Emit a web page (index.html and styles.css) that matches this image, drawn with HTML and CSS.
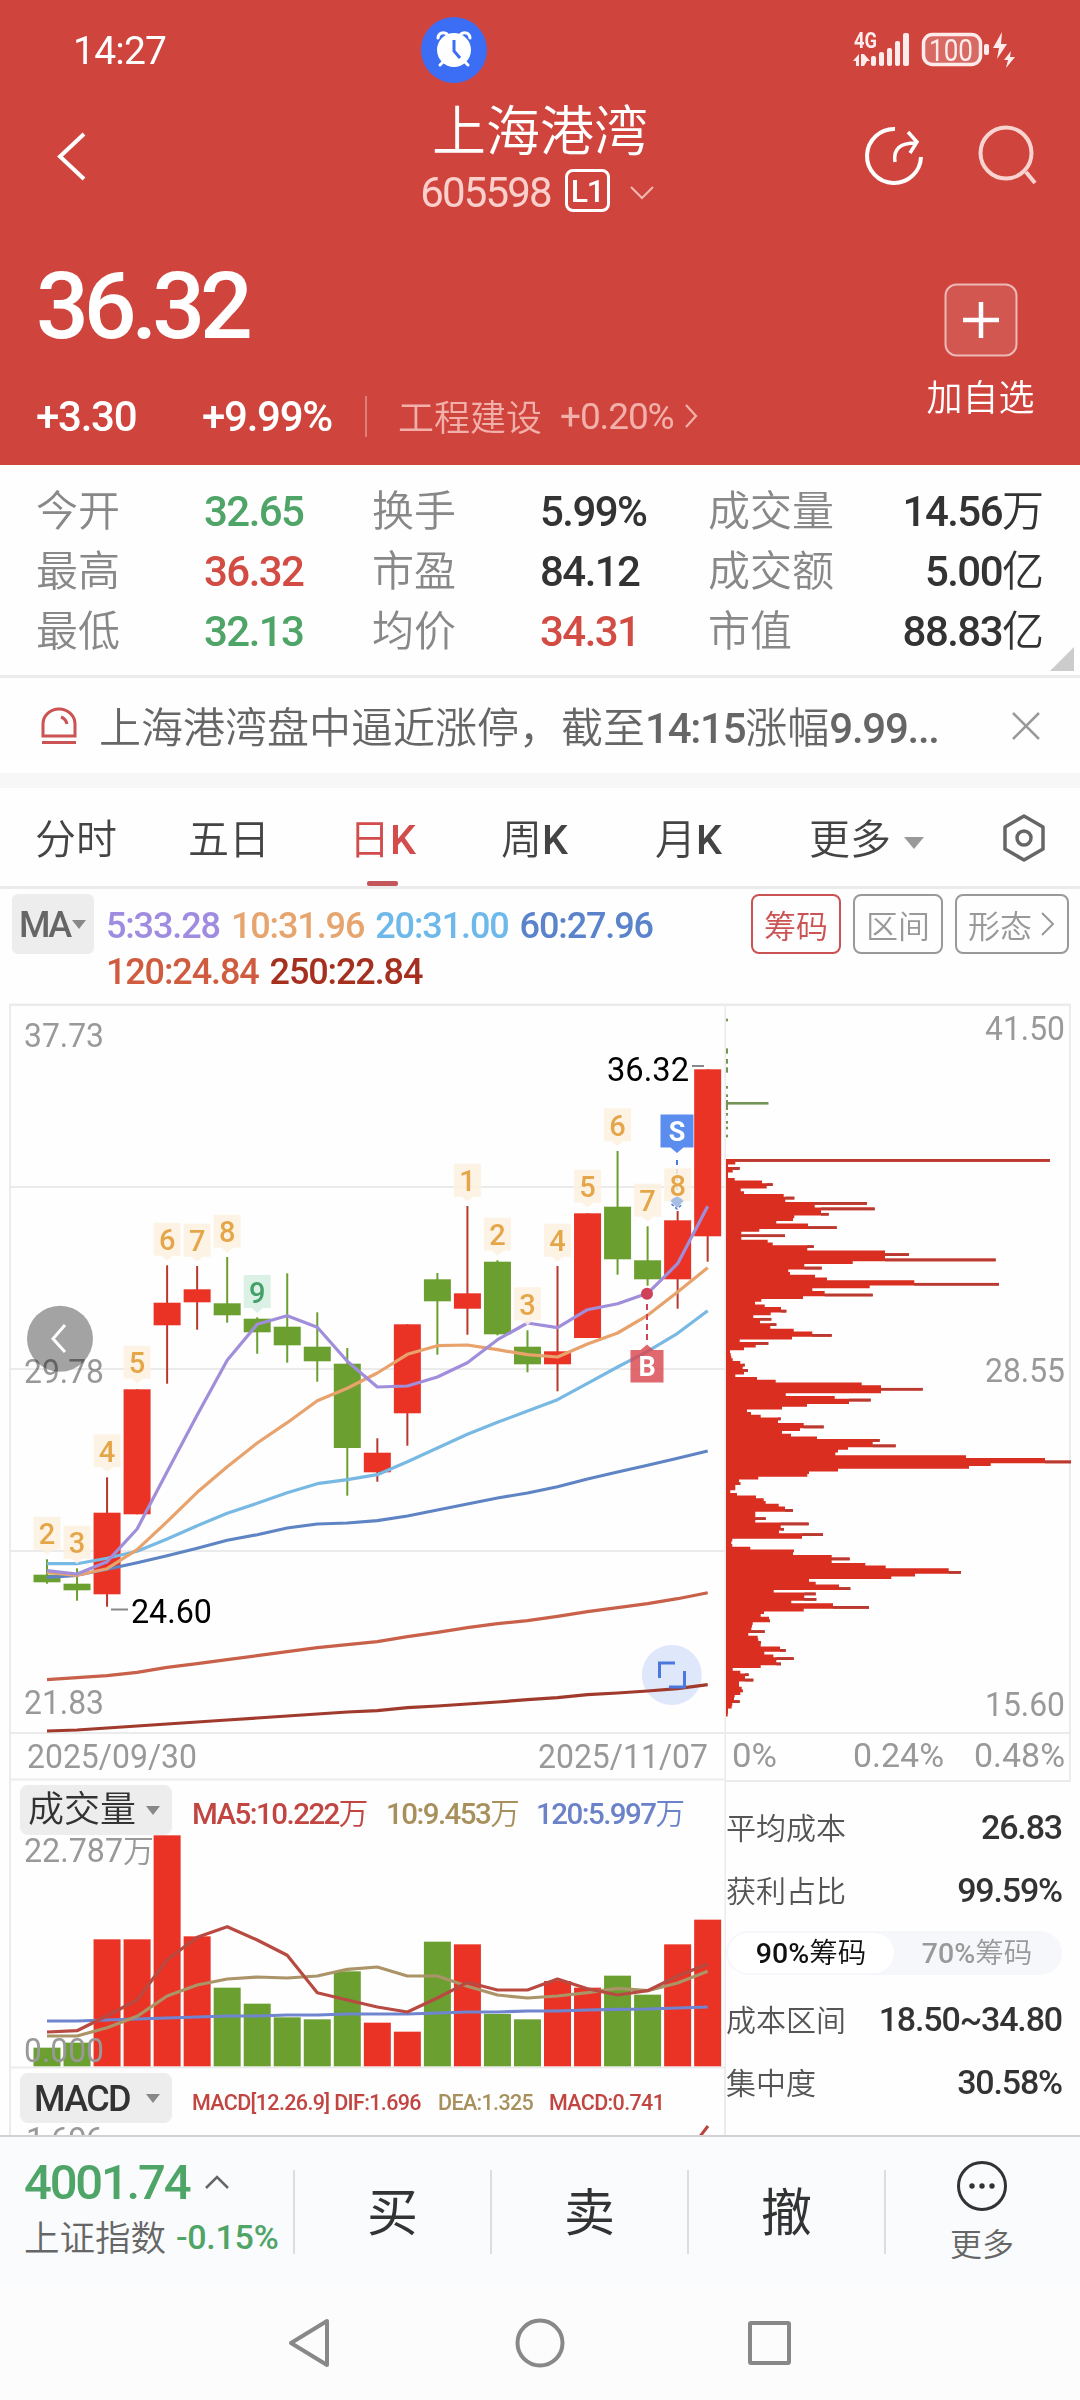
FILE: index.html
```html
<!DOCTYPE html>
<html lang="zh-CN">
<head>
<meta charset="utf-8">
<title>上海港湾 605598</title>
<link rel="stylesheet" href="styles.css">
</head>
<body>
<div class="app">
  <header class="top">
    <div class="status">
      <span class="clock n">14:27</span>
      <svg class="alarm" width="66" height="66" viewBox="0 0 66 66">
        <circle cx="33" cy="33" r="33" fill="#3c6df5"/>
        <g fill="none" stroke="#fff" stroke-width="3" stroke-linecap="round">
          <path d="M17 21a5.500 5.500 0 0 1 9-4M49 21a5.500 5.500 0 0 0-9-4M19 48l4-4M47 48l-4-4"/>
        </g>
        <circle cx="33" cy="33" r="17" fill="#fff"/>
        <path d="M33 23v11l6 7" fill="none" stroke="#3c6df5" stroke-width="3"/>
      </svg>
      <svg class="signal" width="180" height="60" viewBox="0 -11 180 60">
        <text x="4" y="17" class="net" textLength="23" lengthAdjust="spacingAndGlyphs">4G</text>
        <g fill="#fdeceb">
          <path d="M3 30l6-7v12h-3v-5zM11 23h3l6 7h-3l-3 5h-3z"/>
          <rect x="21" y="25" width="5" height="10" rx="2"/><rect x="29" y="21" width="5" height="14" rx="2"/>
          <rect x="37" y="17" width="5" height="18" rx="2"/><rect x="45" y="10" width="5" height="25" rx="2"/>
          <rect x="53" y="2" width="6" height="33" rx="2"/>
          <rect x="134" y="13" width="5" height="11" rx="2"/>
          <path d="M152 1l-9 16h6l-2 11 10-15h-6zM161 20l-7 9h4l-2 8 9-11h-5z"/>
        </g>
        <rect x="73.500" y="3.500" width="57" height="30" rx="9" fill="#fff" fill-opacity=".2" stroke="#fdeceb" stroke-width="3.500"/>
        <text x="79" y="29.500" class="level" textLength="44" lengthAdjust="spacingAndGlyphs">100</text>
      </svg>
    </div>
    <div class="titlebar">
      <svg class="back" width="30" height="52" viewBox="0 0 30 52"><path d="M27 4L3 26.500 27 49" fill="none" stroke="#fff" stroke-width="4"/></svg>
      <div class="name">
        <h1>上海港湾</h1>
        <div class="code"><span class="n">605598</span><b class="lv n">L1</b>
          <svg width="26" height="16" viewBox="0 0 26 16"><path d="M2 2l11 11L24 2" fill="none" stroke="#f3b9b3" stroke-width="2"/></svg>
        </div>
      </div>
      <div class="tools">
        <svg width="64" height="64" viewBox="0 0 64 64" fill="none" stroke="#fff" stroke-width="4">
          <path d="M33 5A27 27 0 1 0 59 33"/><path d="M33 38c-2-13 5-19 21-19M46 8l9 10-7 11" stroke-width="3.500"/>
        </svg>
        <svg width="64" height="64" viewBox="0 0 64 64" fill="none" stroke="#f8d3cf" stroke-width="4">
          <circle cx="31" cy="29" r="25.500"/><path d="M51 48l9 11"/>
        </svg>
      </div>
    </div>
    <div class="quote">
      <div class="price">
        <div class="last n">36.32</div>
        <div class="chg"><span class="n c1">+3.30</span><span class="n c2">+9.99%</span><i></i><span class="ind">工程建设</span><span class="n c3">+0.20%</span>
          <svg width="16" height="26" viewBox="0 0 16 26"><path d="M2 2l10 11L2 24" fill="none" stroke="#f2b0aa" stroke-width="2.200"/></svg>
        </div>
      </div>
      <div class="add">
        <svg width="74" height="74" viewBox="0 0 74 74"><rect x="1.500" y="1.500" width="71" height="71" rx="11" fill="#fff" fill-opacity=".1" stroke="#fff" stroke-opacity=".6" stroke-width="2"/><path d="M37 19v36M19 37h36" stroke="#fff" stroke-width="4.500"/></svg>
        <span>加自选</span>
      </div>
    </div>
  </header>

  <section class="stats">
    <span>今开</span><b class="n g">32.65</b><span>换手</span><b class="n">5.99%</b><span>成交量</span><em><b class="n">14.56</b>万</em>
    <span>最高</span><b class="n r">36.32</b><span>市盈</span><b class="n">84.12</b><span>成交额</span><em><b class="n">5.00</b>亿</em>
    <span>最低</span><b class="n g">32.13</b><span>均价</span><b class="n r">34.31</b><span>市值</span><em><b class="n">88.83</b>亿</em>
    <i class="corner"></i>
  </section>

  <section class="notice">
    <svg width="36" height="38" viewBox="0 0 36 38" fill="none" stroke="#cb5353" stroke-width="3"><path d="M2 29V17a16 15 0 0 1 32 0v12zM1 35.500h34"/><path d="M20 10q5 2 6 7"/></svg>
    <p>上海港湾盘中逼近涨停，截至<b class="n">14:15</b>涨幅<b class="n">9.99...</b></p>
    <svg width="30" height="30" viewBox="0 0 30 30"><path d="M2 2l26 26M28 2L2 28" stroke="#999" stroke-width="2.500"/></svg>
  </section>

  <nav class="tabs">
    <span>分时</span><span>五日</span><span class="on">日<b>K</b></span><span>周<b>K</b></span><span>月<b>K</b></span>
    <span class="more">更多 <i class="tri"></i></span>
    <svg width="46" height="50" viewBox="0 0 46 50" fill="none" stroke="#666" stroke-width="3.500"><path d="M23 3l19 11v22L23 47 4 36V14z" stroke-linejoin="round"/><circle cx="23" cy="25" r="7"/></svg>
  </nav>

  <section class="ma">
    <div class="pill n">MA<i class="tri"></i></div>
    <div class="avgs n">
      <div><span class="m5">5:33.28</span><span class="m10">10:31.96</span><span class="m20">20:31.00</span><span class="m60">60:27.96</span></div>
      <div><span class="m120">120:24.84</span><span class="m250">250:22.84</span></div>
    </div>
    <div class="modes">
      <span class="on">筹码</span><span>区间</span><span>形态<svg width="16" height="26" viewBox="0 0 16 26"><path d="M2 2l11 11L2 24" fill="none" stroke="#999" stroke-width="2"/></svg></span>
    </div>
  </section>

  <main class="charts">
    <div class="left">
      <svg id="kline" width="726" height="777" viewBox="0 1003 726 777"></svg>
      <div class="volwrap">
        <svg id="volume" width="726" height="288" viewBox="0 1780 726 288"></svg>
        <div class="head vol"><div class="pill2">成交量<i class="tri"></i></div>
          <span class="v5"><b class="n">MA5:10.222</b>万</span><span class="v10"><b class="n">10:9.453</b>万</span><span class="v120"><b class="n">120:5.997</b>万</span></div>
      </div>
      <div class="macd">
        <div class="head"><div class="pill2 n">MACD<i class="tri"></i></div>
          <span class="d1 n">MACD[12.26.9] DIF:1.696</span><span class="d2 n">DEA:1.325</span><span class="d3 n">MACD:0.741</span></div>
        <div class="cut"><span class="n">1.696</span><svg width="14" height="14" viewBox="0 0 14 14"><path d="M2 14L12 1" stroke="#b9443f" stroke-width="3"/></svg></div>
      </div>
    </div>
    <div class="right">
      <svg id="chips" width="354" height="780" viewBox="726 1003 354 780"></svg>
      <div class="info">
        <div><span>平均成本</span><b class="n">26.83</b></div>
        <div><span>获利占比</span><b class="n">99.59%</b></div>
        <div class="toggle"><span class="on"><b class="n">90%</b>筹码</span><span><b class="n">70%</b>筹码</span></div>
        <div><span>成本区间</span><b class="n">18.50~34.80</b></div>
        <div><span>集中度</span><b class="n">30.58%</b></div>
      </div>
    </div>
  </main>

  <footer class="bar">
    <div class="index">
      <div class="pt"><b class="n">4001.74</b><svg width="26" height="16" viewBox="0 0 26 16"><path d="M2 14L13 3l11 11" fill="none" stroke="#666" stroke-width="2.500"/></svg></div>
      <div class="nm">上证指数<b class="n">-0.15%</b></div>
    </div>
    <span class="act">买</span><span class="act">卖</span><span class="act">撤</span>
    <div class="etc">
      <svg width="52" height="52" viewBox="0 0 52 52"><circle cx="26" cy="26" r="23.500" fill="none" stroke="#333" stroke-width="3"/><g fill="#333"><circle cx="16" cy="26" r="2.700"/><circle cx="26" cy="26" r="2.700"/><circle cx="36" cy="26" r="2.700"/></g></svg>
      <span>更多</span>
    </div>
  </footer>
  <div class="sysnav">
    <svg width="48" height="52" viewBox="0 0 48 52"><path d="M41 4v44L5 26z"/></svg>
    <svg width="52" height="52" viewBox="0 0 52 52"><circle cx="26" cy="26" r="22.500"/></svg>
    <svg width="48" height="52" viewBox="0 0 48 52"><rect x="4" y="6" width="39" height="40" rx="1"/></svg>
  </div>
</div>
<script src="chart.js"></script>
</body>
</html>
```
FILE: styles.css
```css
* { box-sizing: border-box; }
body { margin: 0; background: #fefefe; }
.app {
  width: 1080px; height: 2400px; overflow: hidden;
  display: flex; flex-direction: column;
  font-family: Roboto, "Noto Sans CJK SC", sans-serif;
  font-weight: 350; color: #333; background: #fefefe;
}
b, em, i, h1, p { font-weight: inherit; font-style: normal; margin: 0; }
svg { display: block; flex: none; overflow: visible; }
.n { letter-spacing: -.037em; font-weight: 500; }
.tri { display: inline-block; width: 0; height: 0; border: 7px solid transparent; border-top: 9px solid #888; border-bottom: 0; }

.top { height: 465px; background: #cf453e; color: #fff; }
.status { height: 96px; display: flex; align-items: center; padding-top: 4px; }
.clock { width: 421px; padding: 2px 0 0 73px; font-size: 39px; font-weight: 400; letter-spacing: -.02em; }
.signal { margin-left: 363px; }
.net { font: 700 22px Roboto, sans-serif; fill: #fdeceb; }
.level { font: 400 32px Roboto, sans-serif; fill: #fdeceb; }
.titlebar { height: 120px; display: grid; grid-template-columns: 1fr auto 1fr; align-items: center; }
.back { margin-left: 57px; }
.name { display: flex; flex-direction: column; align-items: center; height: 120px; padding-top: 3px; }
.name h1 { font-size: 54px; line-height: 68px; }
.code { display: flex; align-items: center; height: 52px; font-size: 42px; color: #fbd0cc; margin-left: -5px; padding-top: 1px; }
.code .n { font-weight: 400; letter-spacing: -.045em; }
.lv { margin: -4px 19px 0 14px; width: 45px; height: 43px; border: 3px solid #fff; border-radius: 8px; color: #fff; font-size: 32px; line-height: 38px; text-align: center; }
.code .lv { font-weight: 500; }
.tools { display: flex; justify-content: flex-end; gap: 49px; padding-right: 41px; }
.quote { display: flex; justify-content: space-between; height: 249px; }
.price { padding: 36px 0 0 36px; }
.last { font-size: 93px; line-height: 110px; letter-spacing: -.055em; }
.chg { display: flex; align-items: center; height: 50px; margin-top: 29px; font-size: 42px; }
.chg .n { letter-spacing: -.03em; }
.c1 { width: 166px; } .c2 { width: 163px; }
.chg i { width: 2px; height: 41px; background: #de807a; margin-right: 31px; }
.ind { width: 162px; font-size: 36px; color: #f2b0aa; margin-top: -2px; }
.c3 { width: 124px; font-size: 37px; color: #f2b0aa; font-weight: 400; }
.chg .c3 { font-weight: 400; }
.add { width: 199px; display: flex; flex-direction: column; align-items: center; padding-top: 67px; font-size: 36px; line-height: 44px; }
.add span { margin-top: 20px; }

.stats { height: 213px; position: relative; padding: 17px 36px 0 36px; border-bottom: 3px solid #ebebeb; display: grid; grid-template-columns: 168px 168px 168px 168px 150px 1fr; grid-auto-rows: 60px; align-items: center; font-size: 42px; line-height: 60px; }
.stats span { color: #888; }
.stats .g { color: #4fa468; } .stats .r { color: #d24c44; }
.stats em { text-align: right; white-space: nowrap; }
.corner { position: absolute; right: 6px; bottom: 4px; border-left: 24px solid transparent; border-bottom: 24px solid #ccc; }

.notice { height: 95px; display: flex; align-items: center; padding: 0 39px 0 41px; font-size: 42px; color: #666; }
.notice p { width: 911px; margin: -2px 0 0 22px; white-space: nowrap; }
.notice .n { letter-spacing: -.03em; }
.notice svg:last-child { margin-left: auto; }
.tabs { height: 116px; border-top: 15px solid #f7f7f7; border-bottom: 3px solid #ebebeb; display: grid; grid-template-columns: 153px 161px 152px 154px 154px 192px 46px; padding-left: 35px; align-items: center; font-size: 41px; color: #444; }
.tabs span { line-height: 105px; height: 98px; position: relative; white-space: nowrap; }
.tabs svg { margin-top: 2px; }
.tabs b { font-weight: 500; }
.tabs .on { color: #d24c4c; }
.tabs .on::after { content: ""; position: absolute; left: 18px; bottom: 0; width: 31px; height: 5px; border-radius: 2px; background: #c4555a; }
.more .tri { border-width: 12px 10.500px 0; border-top-color: #999; margin-left: 3px; vertical-align: 5px; }

.ma { height: 114px; display: flex; padding: 5px 11px 0 12px; }
.pill { width: 82px; height: 60px; border-radius: 6px; background: #ededed; color: #666; font-size: 36px; line-height: 63px; padding-left: 7px; letter-spacing: -.07em; }
.pill .tri { vertical-align: 8px; margin-left: 2px; }
.avgs { width: 658px; padding: 9px 0 0 12px; font-size: 36px; line-height: 46px; letter-spacing: -.031em; }
.avgs span { display: inline-block; margin-right: 11px; }
.m5 { color: #9f8ce0; } .m10 { color: #e6a56e; } .m20 { color: #6fb8ea; } .m60 { color: #5a83cc; } .m120 { color: #d05c40; } .m250 { color: #a5301f; }
.modes { display: flex; gap: 12px; font-size: 32px; color: #999; }
.modes span { width: 90px; height: 60px; border: 2px solid #999; border-radius: 8px; display: flex; align-items: center; justify-content: center; padding-bottom: 1px; }
.modes .on { color: #cb5353; border-color: #cb5353; }
.modes span:last-child { width: 114px; gap: 8px; }

.charts { height: 1132px; display: flex; overflow: hidden; }
.left { width: 726px; }
.volwrap { position: relative; }
.head { display: flex; align-items: center; padding-left: 20px; font-size: 29.500px; height: 60px; }
.head.vol { position: absolute; left: 0; top: 0; }
.head.vol > span { padding-top: 2px; }
.head.vol > span .n { letter-spacing: -.052em; }
.pill2 { width: 152px; height: 50px; background: #ededed; border-radius: 8px; font-size: 36px; line-height: 50px; padding-left: 8px; display: flex; align-items: center; margin-right: 20px; }
.pill2 .tri { margin-left: 10px; }
.pill2.n { padding-left: 14px; padding-top: 1px; letter-spacing: -.045em; } .pill2.n .tri { margin-left: 16px; }
.v5 { width: 194px; color: #c14540; } .v10 { width: 150px; color: #a8905c; } .v120 { color: #6b82c9; }
.macd { height: 67px; border-left: 2px solid #ebebeb; border-right: 2px solid #ebebeb; margin-left: 9px; position: relative; }
.macd .head { padding-left: 9px; font-size: 21.500px; }
.macd .head > span { padding-top: 8px; letter-spacing: -.03em; }
.d1 { width: 246px; color: #c14540; } .d2 { width: 111px; color: #a8905c; } .d3 { color: #c14540; }
.cut { height: 12px; margin-top: -3px; display: flex; justify-content: space-between; padding: 0 14px 0 15px; font-size: 33px; line-height: 38px; color: #999; overflow: hidden; }
.cut .n { font-weight: 400; margin-top: -4px; }
.right { width: 354px; }
.info { padding: 11px 18px 0 0; font-size: 30px; color: #555; }
.info div { height: 63px; display: flex; justify-content: space-between; align-items: center; }
.info div > .n { font-size: 34px; color: #333; letter-spacing: -.034em; padding-top: 2px; }
.info .toggle { height: 44px; border-radius: 22px; background: #f6f7fa; padding: 2px; font-size: 28.500px; margin: 11px 0 11px; color: #999; }
.toggle span { width: 50%; text-align: center; line-height: 41px; height: 40px; border-radius: 20px; }
.toggle .n { letter-spacing: 0; }
.toggle .on { background: #fff; color: #111; }

.bar { height: 151px; border-top: 2px solid #d2d2d2; background: #fafbfd; display: flex; align-items: center; }
.index { width: 293px; padding-left: 24px; height: 149px; color: #666; font-size: 35.500px; }
.pt { display: flex; align-items: center; height: 68px; margin-top: 11px; font-size: 49px; color: #4fa468; }
.pt .n { letter-spacing: -.045em; }
.pt svg { margin-left: 15px; }
.nm { display: flex; height: 44px; margin-top: -3px; align-items: center; white-space: nowrap; }
.nm b { color: #4fa468; font-size: 34px; margin: 3px 0 0 10px; }
.nm .n { letter-spacing: -.008em; }
.act, .etc { border-left: 2px solid #ddd; height: 84px; width: 197px; text-align: center; }
.act { font-size: 51px; line-height: 87px; font-weight: 400; }
.etc { width: 194px; display: flex; flex-direction: column; align-items: center; justify-content: center; font-size: 32px; color: #666; padding-top: 4px; }
.etc span { line-height: 44px; margin-top: 11px; }
.sysnav { height: 114px; background: #fcfcfc; display: flex; justify-content: center; gap: 180px; padding-top: 31px; flex: 1; }
.sysnav svg { fill: none; stroke: #888; stroke-width: 4; stroke-linejoin: round; }

.t { font-family: Roboto, sans-serif; font-weight: 400; }
.ax { font-size: 33px; fill: #999; }
.ext { font-size: 33px; fill: #000; }
.tag { font-size: 29px; font-weight: 500; text-anchor: middle; }
.mk { font-size: 27px; font-weight: 700; fill: #fff; text-anchor: middle; }
.cjk { font-family: "Noto Sans CJK SC", sans-serif; font-weight: 350; }
```
FILE: chart.js
```js
const RED = '#ea3325', GREEN = '#6b9f30', RWICK = '#b8382e', GRID = '#ebebeb';
const X = i => 47 + i * 30.03;
const rect = (x, y, w, h, f) => `<rect x="${x}" y="${y}" width="${w}" height="${h}" fill="${f}"/>`;
const text = (s, x, y, w, cls) => `<text class="t ${cls}" x="${x}" y="${y}" textLength="${w}" lengthAdjust="spacingAndGlyphs">${s}</text>`;
const line = (v, f, c, w = 3.2) => `<polyline points="${v.map((y, i) => X(i).toFixed(1) + ',' + f(y).toFixed(1)).join(' ')}" fill="none" stroke="${c}" stroke-width="${w}" stroke-linejoin="round"/>`;

// up flag, body top, body bottom, high, low
const candles = [
 [0,1574.7,1582.3,1559.3,1583.7],[0,1583.7,1590.3,1568.3,1600.7],[1,1512.7,1594.3,1477.3,1606.7],[1,1389.3,1514.3,1389.3,1514.3],
 [1,1302.7,1325.3,1265.3,1383.7],[1,1289.3,1302.3,1266,1329.7],[0,1303.3,1315.3,1257,1322.7],[0,1318.7,1332.3,1317.3,1353.7],
 [0,1326.7,1345.3,1273.3,1362.7],[0,1346.7,1361.3,1312.3,1381.7],[0,1363.7,1448,1348,1495.7],[1,1452.7,1472.3,1438.3,1481.7],
 [1,1324.3,1413.3,1324.3,1445.7],[0,1279.3,1301.3,1273,1354.7],[1,1293.3,1308.7,1206,1334.7],[0,1261.7,1334.3,1260.3,1335.3],
 [0,1346.7,1364.3,1330.3,1372.3],[1,1351.3,1364.3,1266,1391.3],[1,1213.3,1338,1213.3,1338],[0,1206.7,1259.3,1151,1274.7],
 [0,1260.3,1279.3,1226.3,1285.7],[1,1220.3,1279.3,1211,1308.7],[1,1069.3,1236.3,1069.3,1261.7]];
const k = y => 1300 + y / 3;
const ma = [
 [[1293,1290,1284,1278,1272,1266,1260,1254,1248,1242,1236,1232,1223,1218,1212,1206,1199,1193,1184,1179,1173,1166,1154],'#a03a2c'],
 [[1139,1133,1127,1117,1102,1091,1079,1067,1055,1043,1034,1025,1010,997,983,971,962,949,935,923,911,896,878],'#c8604a'],
 [[832,826,808,788,767,745,721,704,684,672,669,662,648,630,612,594,579,560,537,516,496,475,453],'#5f84c4'],
 [[791,791,775,754,717,677,640,610,578,551,539,524,485,444,403,367,333,299,250,201,154,100,32],'#78b9e4'],
 [[817,826,806,749,665,577,500,429,368,302,265,219,163,137,135,149,164,171,132,99,46,-24,-97],'#e8a26c'],
 [[812,822,785,687,515,345,181,73,47,82,184,261,258,231,188,119,69,83,29,11,-20,-109,-281],'#a08edb']];
const tags = [[0,2,1516.7],[1,3,1525.7],[2,4,1434.3],[3,5,1345.7],[4,6,1222.7],[5,7,1223.7],[6,8,1214.7],[7,9,1275],[14,1,1163.7],
 [15,2,1217.7],[16,3,1287.3],[17,4,1223.7],[18,5,1169.7],[19,6,1108.3],[20,7,1183.7],[21,8,1168.3]];

let s = rect(9, 1003.5, 717, 2.500, GRID) + rect(9, 1004, 2, 776, GRID) + rect(724.5, 1004, 1.500, 776, GRID);
for (const y of [1186, 1368, 1550, 1732, 1778.5]) s += rect(10, y, 716, 2, GRID);
s += '<circle cx="60" cy="1338.700" r="33" fill="#a3a3a3"/><path d="M65 1325L53 1338.700 65 1352" fill="none" stroke="#fff" stroke-width="3"/>';
s += text('37.73', 24, 1047, 80, 'ax') + '<g style="mix-blend-mode:multiply">' + text('29.78', 24, 1383, 80, 'ax') + '</g>' + text('21.83', 24, 1714, 80, 'ax');
s += text('2025/09/30', 27, 1767.5, 170, 'ax') + text('2025/11/07', 538, 1767.5, 170, 'ax');
s += '<circle cx="671.800" cy="1675" r="30" fill="#dfe7fb"/>';
candles.forEach(([up, t, b, h, l], i) => {
  s += rect(X(i) - 1, h, 2, l - h, up ? RWICK : GREEN) + rect(X(i) - 13.5, t, 27, b - t, up ? RED : GREEN);
});
s += '<path d="M677 1160v14M677 1176v26" stroke="#4b7ad0" stroke-width="2" stroke-dasharray="5 4"/>';
for (const [v, c] of ma) s += line(v, k, c);
for (const [i, n, y] of tags) {
  const g = n === 9, x = X(i);
  s += `<path d="M${x - 13.5} ${y}h27v33h-8l-5.500 5-5.500-5h-8z" fill="${g ? '#d6efe1' : '#fdf1e1'}" fill-opacity=".85"/><text class="t tag" x="${x}" y="${y + 27.5}" fill="${g ? '#43a068' : '#e5a64a'}">${n}</text>`;
}
s += '<path d="M660.500 1114.500h33v33h-10l-6.500 5.500-6.500-5.500h-10z" fill="#5b8def"/><text class="t mk" x="677" y="1141">S</text>';
s += '<path d="M670.500 1201q6.500-8 13 0l-6.500 7z" fill="#a9bde3"/><path d="M671.500 1204l5.500 5 5.500-5" fill="none" stroke="#4b7ad0" stroke-width="1.500" stroke-dasharray="3 2"/>';
s += '<circle cx="647" cy="1293.700" r="6" fill="#cf4158"/><path d="M647 1304v40" stroke="#cf4158" stroke-width="2" stroke-dasharray="6 4"/>';
s += '<path d="M630.500 1350h10l6.500-5.500 6.500 5.500h10v32.500h-33z" fill="#d9474f" fill-opacity=".82"/><text class="t mk" x="647" y="1376">B</text>';
s += rect(692, 1065, 12, 2, '#888') + rect(111, 1608.5, 17, 2, '#888') + text('36.32', 607, 1080.5, 82, 'ext') + text('24.60', 131, 1623, 81, 'ext');
s += '<path d="M675 1663h-15.500v15M669 1687h15.500v-16" fill="none" stroke="#4a78dd" stroke-width="3"/>';
document.getElementById('kline').innerHTML = s;

// volume pane
const vt = [833,818,508,508,196,499,653,701,742,748,604,758,785,515,523,732,748,633,653,617,674,523,449];
const up = '00111100000110100110011';
const v = y => 1770 + y / 3;
s = rect(9, 1780, 2, 288, GRID) + rect(724.5, 1780, 1.500, 288, GRID) + rect(10, 2066.5, 716, 2, GRID);
vt.forEach((y, i) => s += rect(X(i) - 13.5, v(y), 27, 2066.3 - v(y), up[i] === '1' ? RED : GREEN));
s += line([753,753,750,747,744,741,738,738,735,735,732,732,732,729,726,726,723,723,720,718,717,714,711], v, '#7085d0');
s += line([798,798,773,739,678,645,627,621,624,618,598,591,618,618,649,675,684,678,668,655,662,639,604], v, '#aa9468');
s += line([786,782,737,690,569,502,470,510,556,668,690,711,726,684,637,660,660,627,656,675,662,618,582], v, '#b84a42');
s += text('22.787', 24, 1862, 99, 'ax') + '<text class="ax cjk" style="font-size:31px" x="123" y="1862">万</text>' + text('0.000', 24, 2062, 80, 'ax');
document.getElementById('volume').innerHTML = s;

// chip distribution, one value per price level (edge positions at 3x)
const chips = [1020,76,54,89,68,54,54,74,156,188,170,92,102,221,253,226,471,314,494,333,356,253,249,199,294,380,148,94,225,94,173,188,311,292,525,597,525,857,428,283,335,235,240,315,351,613,867,479,307,344,488,279,154,135,164,213,229,182,130,184,150,199,181,251,307,365,246,89,175,137,102,60,62,64,68,91,104,98,114,102,76,141,197,455,513,638,513,227,374,482,417,291,216,111,123,152,212,204,281,341,270,216,243,321,509,488,557,414,384,376,768,1005,1083,842,777,384,297,292,145,87,91,76,76,61,81,138,161,167,206,225,249,136,136,167,136,296,212,222,207,339,276,67,64,67,121,251,249,365,419,365,466,527,716,753,615,544,297,317,387,421,191,317,283,319,244,369,477,281,162,152,177,180,128,126,124,164,115,143,145,153,152,210,227,163,190,251,199,213,152,68,91,116,105,130,87,87,95,98,91,74,72,89,67,65,54,54,53];
s = rect(726, 1003.5, 345, 2.500, GRID) + rect(1069, 1004, 2, 778, GRID) + rect(726, 1732, 344, 2, GRID) + rect(726, 1780, 345, 2, GRID);
s += text('41.50', 985, 1040, 80, 'ax') + text('28.55', 985, 1382, 80, 'ax') + text('15.60', 985, 1716, 80, 'ax');
s += text('0%', 732, 1767, 45, 'ax') + text('0.24%', 853, 1767, 91, 'ax') + text('0.48%', 974, 1767, 91, 'ax');
let d = 'M726 1159';
chips.forEach((w, i) => { d += `V${(1159 + i * 2.693).toFixed(1)}H${(726 + (w - 48) / 3).toFixed(1)}v2.700`; });
s += `<path d="${d}H726z" fill="#d92e20"/>`;
chips.forEach((w, i) => {
  const n = Math.max(chips[i - 1] || 0, chips[i + 1] || 0);
  if (w > n) s += rect(726 + (n - 48) / 3, (1159 + i * 2.693).toFixed(1), (w - n) / 3, 2.7, '#b93a30');
});
s += rect(726, 1102, 42.500, 2.600, '#739556');
for (const [a, b] of [[416,424],[505,521],[537,551],[562,578],[618,626],[643,651],[660,690],[699,707],[723,731],[740,748],[764,772]])
  s += rect(726, 880 + a / 3, 2, (b - a) / 3, '#739556');
document.getElementById('chips').innerHTML = s;
```
